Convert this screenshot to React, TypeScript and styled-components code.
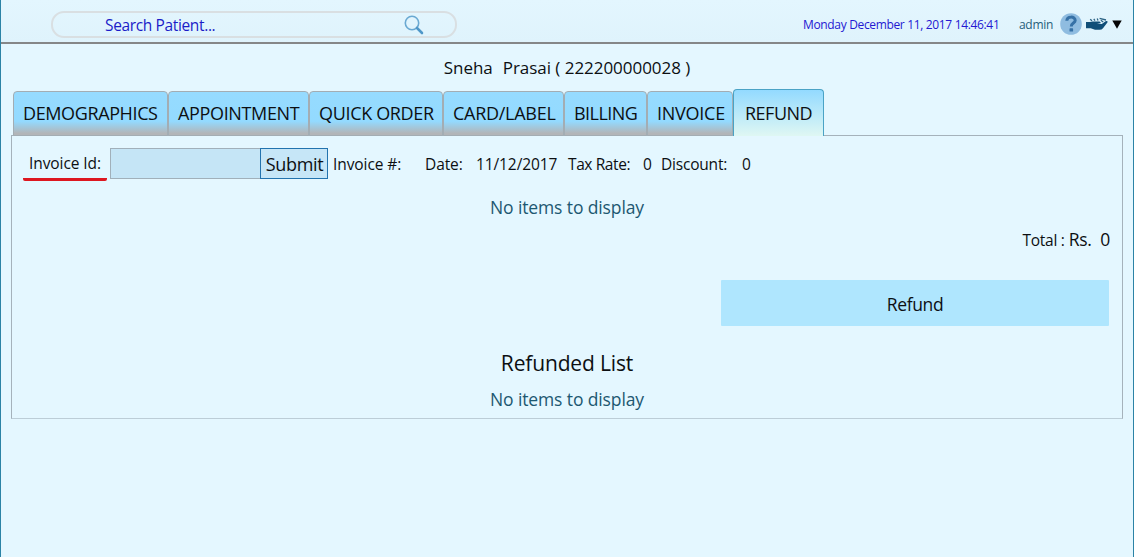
import React from "react";
import styled, { createGlobalStyle } from "styled-components";

const GlobalStyle = createGlobalStyle`
  * { box-sizing: border-box; }
  body {
    margin: 0;
    background: #e4f7ff;
    color: #0c0f12;
    font-family: "Open Sans", "Noto Sans", sans-serif;
    font-weight: 400;
  }
`;

const Page = styled.div`
  height: 557px;
  border: 0 solid #2b83a6;
  border-width: 0 1px;
  overflow: hidden;
`;

const TopBar = styled.header`
  display: flex;
  align-items: center;
  height: 44px;
  padding: 0 11px 0 50px;
  border-bottom: 2px solid #858788;
  background: linear-gradient(#e3f6fe, #dff3fc);
`;

const SearchBox = styled.label`
  display: flex;
  align-items: center;
  justify-content: space-between;
  width: 406px;
  height: 27px;
  margin-top: 6px;
  padding: 1px 31px 0 52px;
  border: 2px solid #d9dfe2;
  border-radius: 13px;
  color: #1c1cc8;
  font-size: 15.5px;
  line-height: 22px;
  letter-spacing: -0.36px;
`;

const Clock = styled.time`
  margin: 6px 0 0 auto;
  width: 216px;
  color: #2418d2;
  font-size: 12px;
  letter-spacing: -0.34px;
  white-space: nowrap;
`;

const UserName = styled.span`
  margin-top: 6px;
  width: 41px;
  color: #27607a;
  font-size: 12px;
  letter-spacing: -0.3px;
`;

const UserIcons = styled.div`
  display: flex;
  align-items: center;
  gap: 4px;
  margin-top: 6px;
  height: 24px;
`;

const PatientTitle = styled.h1`
  display: flex;
  justify-content: center;
  gap: 10px;
  margin: 0;
  height: 45px;
  padding-top: 12px;
  font-size: 17px;
  font-weight: inherit;
  line-height: 24px;
  letter-spacing: -0.04px;
`;

const TabList = styled.nav`
  display: flex;
  align-items: flex-end;
  height: 47px;
  padding-left: 12px;
  margin-bottom: -1px;
  position: relative;
`;

const Tab = styled.button<{ $width: number; $tracking: number; $active?: boolean }>`
  width: ${(p) => p.$width}px;
  height: ${(p) => (p.$active ? 47 : 45)}px;
  padding: ${(p) => (p.$active ? "0 0 1px 11px" : "0 0 2px 9px")};
  border: 1px solid ${(p) => (p.$active ? "#4aa3c6" : "#a3adb3")};
  border-bottom: ${(p) => (p.$active ? "0" : "1px solid #a3adb3")};
  border-radius: 4px 4px 0 0;
  background: ${(p) =>
    p.$active
      ? "linear-gradient(#93daff, #dff7f3)"
      : "linear-gradient(#96dbff 0%, #93daff 68%, #b2b5b8 96%)"};
  color: inherit;
  font: inherit;
  font-size: 18px;
  line-height: 24px;
  letter-spacing: ${(p) => p.$tracking}px;
  text-align: left;
  white-space: nowrap;
`;

const Panel = styled.main`
  height: 284px;
  margin: 0 10px;
  border: 1px solid #a5b2bb;
  border-bottom-color: #bccdd7;
`;

const InvoiceRow = styled.form`
  display: flex;
  align-items: center;
  height: 31px;
  margin-top: 12px;
  padding-left: 11px;
  font-size: 15.5px;
  white-space: nowrap;
`;

const RequiredLabel = styled.label`
  width: 84px;
  height: 33px;
  margin: 2px 3px 0 0;
  padding: 2px 0 0 6px;
  border-bottom: 3px solid #dd1720;
  border-radius: 2px;
  line-height: 27px;
  letter-spacing: -0.08px;
`;

const InvoiceInput = styled.input`
  width: 150px;
  height: 31px;
  border: 1px solid #a1b0ba;
  border-right: 0;
  border-radius: 0;
  background: #c5e5f6;
  outline: 0;
`;

const SubmitButton = styled.button`
  width: 68px;
  height: 31px;
  margin-right: 5px;
  padding: 2px 0 0 1px;
  border: 1px solid #2273ae;
  background: #c6e6f7;
  color: inherit;
  font: inherit;
  font-size: 18px;
  line-height: 27px;
  letter-spacing: -0.35px;
`;

const Field = styled.span<{ $width: number; $tracking?: number }>`
  width: ${(p) => p.$width}px;
  padding-top: 1px;
  letter-spacing: ${(p) => p.$tracking ?? 0}px;
`;

const EmptyMessage = styled.p`
  margin: 0;
  color: #1d5871;
  font-size: 17.5px;
  line-height: 24px;
  letter-spacing: -0.12px;
  text-align: center;
`;

const Items = styled.section`
  height: 48px;
  padding-top: 16px;
`;

const TotalRow = styled.div`
  display: flex;
  justify-content: flex-end;
  align-items: baseline;
  height: 53px;
  padding-right: 12px;
  font-size: 15.5px;
  line-height: 24px;
  letter-spacing: -0.25px;
`;

const Amount = styled.span`
  margin-left: 4px;
  font-size: 17.5px;
  white-space: pre;
`;

const RefundButton = styled.button`
  display: block;
  width: 388px;
  height: 46px;
  margin: 0 13px 0 auto;
  padding: 1px 0 0;
  border: 0;
  border-radius: 1px;
  background: #afe6fe;
  color: inherit;
  font: inherit;
  font-size: 17.5px;
  letter-spacing: -0.35px;
`;

const ListTitle = styled.h2`
  margin: 22px 0 9px;
  font-size: 21px;
  font-weight: inherit;
  line-height: 30px;
  letter-spacing: -0.15px;
  text-align: center;
`;

const TABS = [
  { name: "DEMOGRAPHICS", width: 155, tracking: -0.38 },
  { name: "APPOINTMENT", width: 141, tracking: -0.35 },
  { name: "QUICK ORDER", width: 134, tracking: -0.34 },
  { name: "CARD/LABEL", width: 121, tracking: -0.28 },
  { name: "BILLING", width: 83, tracking: -0.55 },
  { name: "INVOICE", width: 86, tracking: -0.25 },
  { name: "REFUND", width: 91, tracking: -0.5 },
];

const SearchIcon = () => (
  <svg width="20" height="20" viewBox="0 0 20 20" fill="none">
    <circle cx="8" cy="8" r="6.7" stroke="#6aa9d2" strokeWidth="1.6" />
    <path d="M13 13l5 5" stroke="#4f97c8" strokeWidth="2.6" strokeLinecap="round" />
  </svg>
);

const HelpIcon = () => (
  <svg width="22" height="22" viewBox="0 0 22 22" fill="none">
    <circle cx="11" cy="11" r="10.8" fill="#8fbce0" />
    <path d="M6.8 7.8C7 2.9 15.3 3 15.2 7.5C15.1 10.2 11.3 10 11.3 13.4" stroke="#3671a6" strokeWidth="3" />
    <rect x="9.5" y="15.3" width="3.6" height="3.2" rx="0.6" fill="#3671a6" />
  </svg>
);

const HandIcon = () => (
  <svg width="22" height="14" viewBox="0 0 22 14">
    <path
      d="M0 5H4L6.5 4.6H13.5L15 6L11 6.8L15.8 7L19.6 4.2Q22.2 3.6 21.4 5.6L17 11.3Q15.8 12.8 13.5 12.8H9L4.8 11.2H0Z"
      fill="#114f78"
    />
    <path d="M4.2 2.2L6 3.8M7.8 1.8L9 3.6M11.2 1.6L12 3.4M13.6 1.4L20 3M14.8 3.3L17.2 5" stroke="#2c6384" strokeWidth="1.3" />
  </svg>
);

const CaretIcon = () => (
  <svg width="10" height="9" viewBox="0 0 10 9">
    <path d="M0.3 0.5H9.7L5 8.7Z" fill="#050505" />
  </svg>
);

export default function App() {
  return (
    <Page>
      <GlobalStyle />
      <TopBar>
        <SearchBox>
          Search Patient...
          <SearchIcon />
        </SearchBox>
        <Clock>Monday December 11, 2017 14:46:41</Clock>
        <UserName>admin</UserName>
        <UserIcons>
          <HelpIcon />
          <HandIcon />
          <CaretIcon />
        </UserIcons>
      </TopBar>
      <PatientTitle>
        <span>Sneha</span>
        <span>Prasai ( 222200000028 )</span>
      </PatientTitle>
      <TabList>
        {TABS.map((tab) => (
          <Tab key={tab.name} $width={tab.width} $tracking={tab.tracking} $active={tab.name === "REFUND"}>
            {tab.name}
          </Tab>
        ))}
      </TabList>
      <Panel>
        <InvoiceRow>
          <RequiredLabel htmlFor="invoice-id">Invoice Id:</RequiredLabel>
          <InvoiceInput id="invoice-id" />
          <SubmitButton type="button">Submit</SubmitButton>
          <Field $width={92} $tracking={-0.08}>Invoice #:</Field>
          <Field $width={51} $tracking={-0.1}>Date:</Field>
          <Field $width={92} $tracking={-0.1}>11/12/2017</Field>
          <Field $width={75} $tracking={-0.4}>Tax Rate:</Field>
          <Field $width={18}>0</Field>
          <Field $width={81} $tracking={-0.2}>Discount:</Field>
          <Field $width={12}>0</Field>
        </InvoiceRow>
        <Items>
          <EmptyMessage>No items to display</EmptyMessage>
        </Items>
        <TotalRow>
          Total :<Amount>Rs.  0</Amount>
        </TotalRow>
        <RefundButton type="button">Refund</RefundButton>
        <ListTitle>Refunded List</ListTitle>
        <EmptyMessage>No items to display</EmptyMessage>
      </Panel>
    </Page>
  );
}
